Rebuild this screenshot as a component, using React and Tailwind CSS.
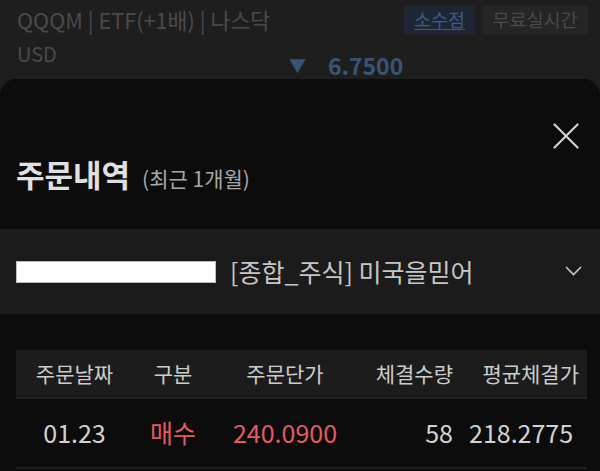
import React from "react";

const font = { fontFamily: '"Noto Sans CJK KR", "Noto Sans", sans-serif' };

export default function App() {
  return (
    <div className="w-[600px] h-[471px] overflow-hidden bg-[#1e1e1e] flex flex-col" style={font}>
      {/* background page */}
      <div className="h-[79px] shrink-0 relative">
        <div className="flex items-center justify-between pl-[17px] pr-[12px] pt-[6px]">
          <div className="text-[21.7px] leading-[28px] text-[#4a4a4a]">QQQM | ETF(+1배) | 나스닥</div>
          <div className="flex gap-[7px]">
            <div className="h-[28px] w-[71px] bg-[#1e2636] flex items-center justify-center text-[18.5px] text-[#3c5a86] underline underline-offset-2">소수점</div>
            <div className="h-[28px] w-[106px] bg-[#252525] flex items-center justify-center text-[18.5px] text-[#4a4a4a]">무료실시간</div>
          </div>
        </div>
        <div className="flex pl-[17px] mt-[7px]">
          <div className="text-[20px] leading-[26px] text-[#4a4a4a]">USD</div>
          <div className="ml-[232px] mt-[11px] flex items-center text-[#3a5478] font-bold text-[23px] leading-[26px]">
            <span className="text-[17px]">▼</span>
            <span className="ml-[22px]">6.7500</span>
          </div>
        </div>
      </div>

      {/* sheet */}
      <div className="flex-1 bg-[#0c0c0c] rounded-t-[16px] relative z-10 flex flex-col">
        <div className="flex justify-end pt-[44px] pr-[21px]">
          <svg width="26" height="26" viewBox="0 0 26 26" fill="none" stroke="#d4d4d4" strokeWidth="2.2" strokeLinecap="round">
            <line x1="1.5" y1="1.5" x2="24.5" y2="24.5" />
            <line x1="24.5" y1="1.5" x2="1.5" y2="24.5" />
          </svg>
        </div>
        <div className="flex items-baseline pl-[16px] mt-[5px]">
          <span className="text-[31px] leading-[40px] font-bold text-[#e0e0e0]">주문내역</span>
          <span className="ml-[12px] text-[21px] text-[#a8a8a8]">(최근 1개월)</span>
        </div>

        <div className="mt-[34px] h-[85px] bg-[#1b1b1b] flex items-center pl-[16px] pr-[18px]">
          <div className="w-[200px] h-[22px] bg-white border border-[#bbbbbb] mt-[2px]" />
          <div className="ml-[14px] text-[25px] text-[#c6c6c6] leading-[32px]">[종합_주식] 미국을믿어</div>
          <div className="ml-auto">
            <svg width="17" height="10" viewBox="0 0 17 10" fill="none" stroke="#c8c8c8" strokeWidth="1.6">
              <polyline points="1,1 8.5,8.5 16,1" />
            </svg>
          </div>
        </div>

        <div className="mt-[36px] mx-[16px] w-[571px]">
          <div className="h-[49px] bg-[#1c1c1c] grid grid-cols-[117px_80px_144px_112px_118px] items-center text-[21px] text-[#cccccc] border-b border-[#262626]">
            <div className="text-center">주문날짜</div>
            <div className="text-center">구분</div>
            <div className="text-center">주문단가</div>
            <div className="text-right pr-[16px]">체결수량</div>
            <div className="text-right pr-[8px]">평균체결가</div>
          </div>
          <div className="h-[70px] grid grid-cols-[117px_80px_144px_112px_118px] items-center text-[25px] text-[#d2d2d2] border-b-[2px] border-[#1f1f1f]">
            <div className="text-center">01.23</div>
            <div className="text-center text-[#e35b5f]">매수</div>
            <div className="text-center text-[#e35b5f]">240.0900</div>
            <div className="text-right pr-[16px]">58</div>
            <div className="text-right pr-[18px]">218.2775</div>
          </div>
        </div>
      </div>
    </div>
  );
}
